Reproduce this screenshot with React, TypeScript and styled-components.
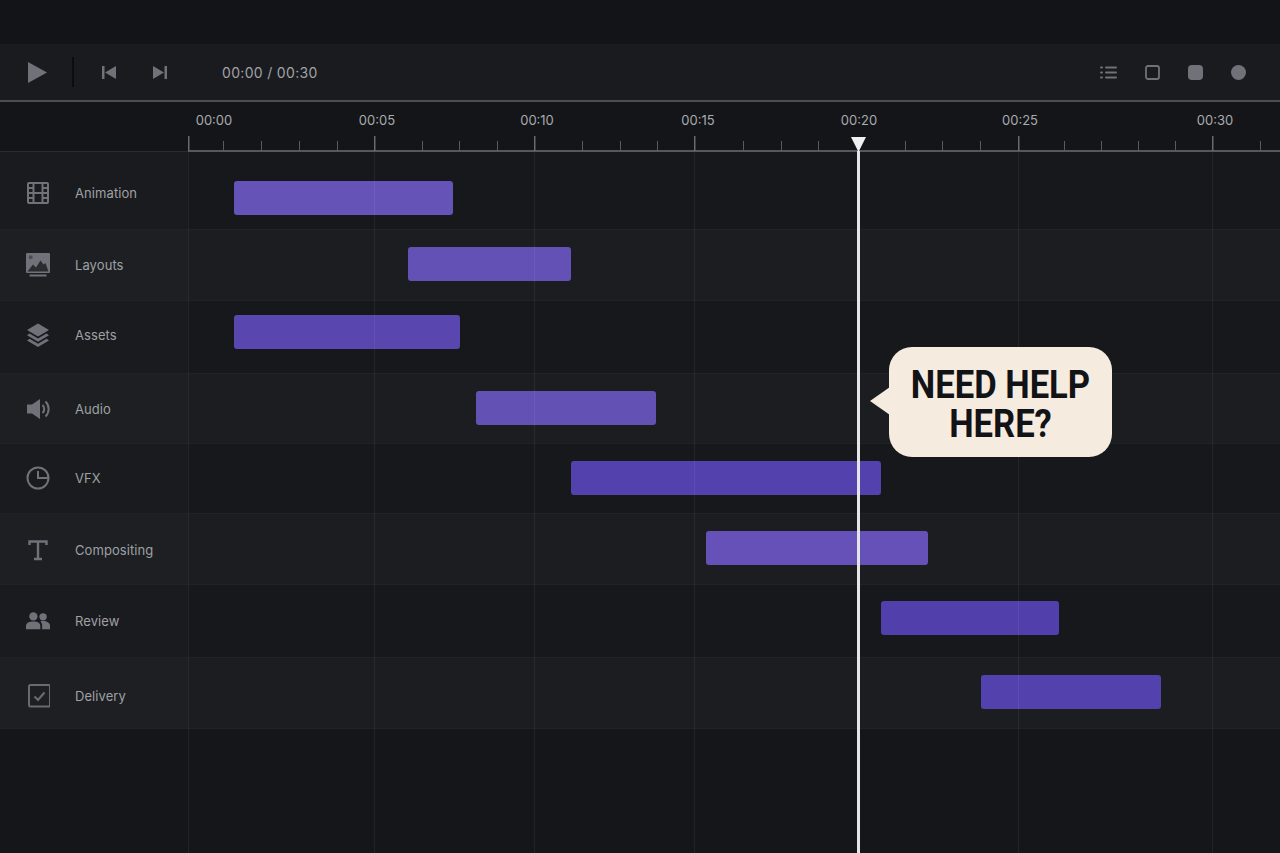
import React from 'react';
import styled, { createGlobalStyle } from 'styled-components';

const GlobalStyle = createGlobalStyle`
    html, body {
        margin: 0;
        padding: 0;
        background: #15161a;
    }
    body {
        font-family: Inter, "Noto Sans", sans-serif;
        -webkit-font-smoothing: antialiased;
    }
`;

const ICON = '#6f7278';
const SIDEBAR_WIDTH = 188;

const Page = styled.div`
    display: flex;
    flex-direction: column;
    height: 853px;
    overflow: hidden;
    background: #15161a;
`;

const TopStrip = styled.div`
    height: 44px;
    background: #131417;
`;

const Toolbar = styled.div`
    display: flex;
    align-items: center;
    height: 56px;
    padding: 0 34px 0 28px;
    background: #1a1b1f;
    border-bottom: 2px solid #4b4d50;
`;

const ToolDivider = styled.div`
    width: 2px;
    height: 30px;
    margin: 0 28px 0 25px;
    background: #0c0d0f;
`;

const SkipGroup = styled.div`
    display: flex;
    gap: 37px;
`;

const TimeCode = styled.div`
    margin-left: 55px;
    font-size: 14px;
    letter-spacing: 0.32px;
    color: #a0a2a5;
`;

const ToolActions = styled.div`
    display: flex;
    align-items: center;
    gap: 28px;
    margin-left: auto;
`;

const Ruler = styled.div`
    display: flex;
    height: 50px;
    background: #141519;
    border-bottom: 1px solid #2a2b2f;
    box-sizing: border-box;
`;

const RulerCorner = styled.div`
    width: ${SIDEBAR_WIDTH}px;
    flex: none;
`;

const RulerAxis = styled.div`
    position: relative;
    flex: 1;
`;

const RulerLabel = styled.span<{ $x: number }>`
    position: absolute;
    top: 10px;
    left: ${(p) => p.$x - SIDEBAR_WIDTH}px;
    transform: translateX(-50%);
    font-size: 13px;
    line-height: 16px;
    color: #a9abad;
`;

const RulerTicks = styled.svg`
    position: absolute;
    left: 0;
    bottom: -1px;
    display: block;
`;

const Body = styled.div`
    position: relative;
    flex: 1;
    display: flex;
    flex-direction: column;
`;

const Row = styled.div<{ $height: number; $alt: boolean }>`
    display: flex;
    height: ${(p) => p.$height}px;
    box-sizing: border-box;
    background: ${(p) => (p.$alt ? '#1b1d20' : '#17181c')};
    border-bottom: 1px solid #202226;
`;

const RowHead = styled.div<{ $top: number; $alt: boolean }>`
    display: flex;
    align-items: flex-start;
    width: ${SIDEBAR_WIDTH}px;
    flex: none;
    box-sizing: border-box;
    padding: ${(p) => p.$top}px 0 0 26px;
    background: ${(p) => (p.$alt ? '#1d1f23' : '#1a1b1f')};
`;

const IconSlot = styled.div`
    display: flex;
    align-items: center;
    justify-content: center;
    width: 24px;
    height: 24px;
    flex: none;
`;

const RowLabel = styled.span`
    margin-left: 25px;
    font-size: 13px;
    letter-spacing: 0.08px;
    line-height: 24px;
    color: #9fa1a4;
`;

const Track = styled.div<{ $top: number }>`
    flex: 1;
    padding-top: ${(p) => p.$top}px;
`;

const Bar = styled.div<{ $x: number; $w: number; $color: string }>`
    width: ${(p) => p.$w}px;
    height: 34px;
    margin-left: ${(p) => p.$x - SIDEBAR_WIDTH}px;
    border-radius: 3px;
    background: ${(p) => p.$color};
`;

const Gridline = styled.div<{ $x: number }>`
    position: absolute;
    top: 0;
    bottom: 0;
    left: ${(p) => p.$x}px;
    width: 1px;
    background: rgba(255, 255, 255, 0.06);
`;

const PlayheadLine = styled.div`
    position: absolute;
    top: -1px;
    bottom: 0;
    left: 857px;
    width: 3px;
    background: #e4e5e6;
`;

const PlayheadCap = styled.div`
    position: absolute;
    top: 137px;
    left: 851px;
    width: 15px;
    height: 15px;
    background: #f0f0f0;
    clip-path: polygon(0 0, 100% 0, 50% 100%);
`;

const Bubble = styled.div`
    position: absolute;
    top: 347px;
    left: 889px;
    display: flex;
    align-items: center;
    justify-content: center;
    width: 223px;
    height: 110px;
    border-radius: 23px;
    background: #f5ecdf;
    font-family: Roboto, "Liberation Sans", sans-serif;
    font-size: 38px;
    font-weight: 700;
    line-height: 39px;
    text-align: center;
    color: #121316;

    &::before {
        content: '';
        position: absolute;
        top: 40px;
        left: -19px;
        width: 20px;
        height: 28px;
        background: #f5ecdf;
        clip-path: polygon(100% 0, 100% 100%, 0 50%);
    }
`;

const BubbleText = styled.span`
    display: block;
    padding-top: 5px;
    white-space: nowrap;
    transform: scaleX(0.91);
`;

const FilmIcon = () => (
    <svg width="24" height="24" viewBox="0 0 24 24" fill="none" stroke={ICON} strokeWidth="2">
        <rect x="2" y="2" width="20" height="20" rx="1" />
        <path d="M7.500 2v20M16.500 2v20M7.500 12h9M2 7h5.500M2 12h5.500M2 17h5.500M16.500 7H22M16.500 12H22M16.500 17H22" />
    </svg>
);

const ImageIcon = () => (
    <svg width="24" height="24" viewBox="0 0 24 24" fill={ICON}>
        <rect x="0" y="0" width="24" height="20" rx="1" />
        <path fill="#2a2c30" d="M1.500 18.500l5.500-7 3 3 4.500-7 3 4 2-1.500 3 8.500z" />
        <rect x="3" y="2.500" width="3.500" height="3.500" fill="#4a4c52" />
        <rect x="3.500" y="21.500" width="17" height="2" />
    </svg>
);

const LayersIcon = () => (
    <svg width="24" height="24" viewBox="0 0 24 24" fill={ICON}>
        <path d="M12 .5l11 6.500L12 13.500 1 7z" />
        <path d="M3.500 10.500L12 15.500l8.500-5 2.500 1.700L12 18.700 1 12.200z" />
        <path d="M3.500 15.800L12 20.800l8.500-5 2.500 1.700L12 24 1 17.500z" />
    </svg>
);

const SpeakerIcon = () => (
    <svg width="24" height="24" viewBox="0 0 24 24" fill={ICON}>
        <path d="M1 7.500h5L14 2v20l-8-5.500H1z" />
        <path fill="none" stroke={ICON} strokeWidth="2" d="M16.500 8a5.500 5.500 0 0 1 0 8M19.500 4.500a10.500 10.500 0 0 1 0 15" />
    </svg>
);

const ClockIcon = () => (
    <svg width="24" height="24" viewBox="0 0 24 24" fill="none" stroke={ICON} strokeWidth="2">
        <circle cx="12" cy="12" r="10.500" />
        <path d="M12 5v7h10" />
    </svg>
);

const SerifTIcon = () => (
    <svg width="24" height="24" viewBox="0 0 24 24" fill="none" stroke={ICON} strokeWidth="2.400">
        <path d="M3.500 7V3.500h17V7M12 3.500V21M8 21h8" />
    </svg>
);

const PeopleIcon = () => (
    <svg width="26" height="20" viewBox="0 0 26 20" fill={ICON}>
        <circle cx="8" cy="5" r="4.500" />
        <circle cx="18.500" cy="5.500" r="4" />
        <path d="M0 19v-3.500C0 12 3.500 10.500 8 10.500s7.500 1.500 7.500 5V19z" />
        <path d="M17.500 19v-4c0-2-.8-3.500-2-4.500 1-.4 2-.5 3-.5 4 0 7.500 2 7.500 5v4z" />
    </svg>
);

const CheckboxIcon = () => (
    <svg width="24" height="24" viewBox="0 0 24 24" fill="none" stroke="#676a70" strokeWidth="2">
        <rect x="3" y="1" width="21" height="21.500" rx="1.500" />
        <path d="M8.500 12.500l3.500 3.500 6.500-7.500" strokeWidth="2.200" />
    </svg>
);

const PlayIcon = () => (
    <svg width="19" height="21" viewBox="0 0 19 21" fill={ICON}>
        <path d="M0 0l19 10.500L0 21z" />
    </svg>
);

const SkipBackIcon = () => (
    <svg width="14" height="13" viewBox="0 0 14 13" fill={ICON}>
        <rect x="0" y="0" width="2.500" height="13" />
        <path d="M14 0v13L3 6.500z" />
    </svg>
);

const SkipNextIcon = () => (
    <svg width="14" height="13" viewBox="0 0 14 13" fill={ICON}>
        <rect x="11.500" y="0" width="2.500" height="13" />
        <path d="M0 0v13l11-6.500z" />
    </svg>
);

const ListIcon = () => (
    <svg width="17" height="13" viewBox="0 0 17 13" fill={ICON}>
        <rect x="0" y="0.500" width="3" height="2" rx="1" />
        <rect x="5" y="0.500" width="12" height="2" rx="1" />
        <rect x="0" y="5.500" width="3" height="2" rx="1" />
        <rect x="5" y="5.500" width="12" height="2" rx="1" />
        <rect x="0" y="10.500" width="3" height="2" rx="1" />
        <rect x="5" y="10.500" width="12" height="2" rx="1" />
    </svg>
);

const SquareIcon = () => (
    <svg width="15" height="15" viewBox="0 0 15 15" fill="none" stroke={ICON} strokeWidth="1.800">
        <rect x="1" y="1" width="13" height="13" rx="2" />
    </svg>
);

const RoundedIcon = () => (
    <svg width="15" height="15" viewBox="0 0 15 15" fill={ICON}>
        <rect width="15" height="15" rx="4" />
    </svg>
);

const DotIcon = () => (
    <svg width="15" height="15" viewBox="0 0 15 15" fill={ICON}>
        <circle cx="7.500" cy="7.500" r="7.500" />
    </svg>
);

const labels = [
    { x: 214, text: '00:00' },
    { x: 377, text: '00:05' },
    { x: 537, text: '00:10' },
    { x: 698, text: '00:15' },
    { x: 859, text: '00:20' },
    { x: 1020, text: '00:25' },
    { x: 1215, text: '00:30' },
];

const majorTicks = [188, 374, 534, 694, 1018, 1212];
const minorTicks = [
    223, 261, 299, 337, 422, 459, 497, 582, 620, 657, 743, 781, 818, 905, 942,
    980, 1064, 1101, 1138, 1175, 1260,
];

const rows = [
    { label: 'Animation', icon: <FilmIcon />, height: 78, labelTop: 29, barTop: 29, x: 234, w: 219, color: '#6553b8' },
    { label: 'Layouts', icon: <ImageIcon />, height: 71, labelTop: 23, barTop: 17, x: 408, w: 163, color: '#6351b6' },
    { label: 'Assets', icon: <LayersIcon />, height: 73, labelTop: 22, barTop: 14, x: 234, w: 226, color: '#5946ae' },
    { label: 'Audio', icon: <SpeakerIcon />, height: 70, labelTop: 23, barTop: 17, x: 476, w: 180, color: '#6351b3' },
    { label: 'VFX', icon: <ClockIcon />, height: 70, labelTop: 22, barTop: 17, x: 571, w: 310, color: '#5342ad' },
    { label: 'Compositing', icon: <SerifTIcon />, height: 71, labelTop: 24, barTop: 17, x: 706, w: 222, color: '#6551b8' },
    { label: 'Review', icon: <PeopleIcon />, height: 73, labelTop: 24, barTop: 16, x: 881, w: 178, color: '#5140ac' },
    { label: 'Delivery', icon: <CheckboxIcon />, height: 71, labelTop: 26, barTop: 17, x: 981, w: 180, color: '#5342ae' },
];

export default function App() {
    return (
        <Page>
            <GlobalStyle />
            <TopStrip />
            <Toolbar>
                <PlayIcon />
                <ToolDivider />
                <SkipGroup>
                    <SkipBackIcon />
                    <SkipNextIcon />
                </SkipGroup>
                <TimeCode>00:00 / 00:30</TimeCode>
                <ToolActions>
                    <ListIcon />
                    <SquareIcon />
                    <RoundedIcon />
                    <DotIcon />
                </ToolActions>
            </Toolbar>
            <Ruler>
                <RulerCorner />
                <RulerAxis>
                    {labels.map((l) => (
                        <RulerLabel key={l.text} $x={l.x}>
                            {l.text}
                        </RulerLabel>
                    ))}
                    <RulerTicks width="1092" height="16" viewBox="0 0 1092 16">
                        <rect x="0" y="14" width="1092" height="2" fill="#56585b" />
                        {majorTicks.map((x) => (
                            <rect key={x} x={x - SIDEBAR_WIDTH} y="0" width="1.5" height="15" fill="#686a6d" />
                        ))}
                        {minorTicks.map((x) => (
                            <rect key={x} x={x - SIDEBAR_WIDTH} y="5" width="1" height="10" fill="#595b5e" />
                        ))}
                    </RulerTicks>
                </RulerAxis>
            </Ruler>
            <Body>
                {rows.map((row, i) => (
                    <Row key={row.label} $height={row.height} $alt={i % 2 === 1}>
                        <RowHead $top={row.labelTop} $alt={i % 2 === 1}>
                            <IconSlot>{row.icon}</IconSlot>
                            <RowLabel>{row.label}</RowLabel>
                        </RowHead>
                        <Track $top={row.barTop}>
                            <Bar $x={row.x} $w={row.w} $color={row.color} />
                        </Track>
                    </Row>
                ))}
                {majorTicks.map((x) => (
                    <Gridline key={x} $x={x} />
                ))}
                <PlayheadLine />
            </Body>
            <PlayheadCap />
            <Bubble>
                <BubbleText>
                    NEED HELP
                    <br />
                    HERE?
                </BubbleText>
            </Bubble>
        </Page>
    );
}
